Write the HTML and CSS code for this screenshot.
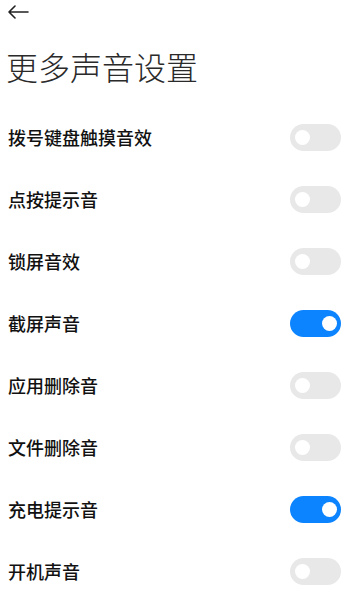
FILE: index.html
```html
<!DOCTYPE html>
<html lang="zh-CN">
<head>
<meta charset="utf-8">
<link rel="stylesheet" href="styles.css">
</head>
<body>
<div class="page">
  <div class="topbar">
    <svg class="back" width="22" height="14" viewBox="0 0 22 14"><path d="M21 7H2M8 1L2 7l6 6" fill="none" stroke="#222" stroke-width="1.6" stroke-linecap="round" stroke-linejoin="round"/></svg>
  </div>
  <h1 class="title">更多声音设置</h1>
  <ul class="list">
    <li class="row"><span class="label">拨号键盘触摸音效</span><span class="toggle"><span class="knob"></span></span></li>
    <li class="row"><span class="label">点按提示音</span><span class="toggle"><span class="knob"></span></span></li>
    <li class="row"><span class="label">锁屏音效</span><span class="toggle"><span class="knob"></span></span></li>
    <li class="row"><span class="label">截屏声音</span><span class="toggle on"><span class="knob"></span></span></li>
    <li class="row"><span class="label">应用删除音</span><span class="toggle"><span class="knob"></span></span></li>
    <li class="row"><span class="label">文件删除音</span><span class="toggle"><span class="knob"></span></span></li>
    <li class="row"><span class="label">充电提示音</span><span class="toggle on"><span class="knob"></span></span></li>
    <li class="row"><span class="label">开机声音</span><span class="toggle"><span class="knob"></span></span></li>
  </ul>
</div>
</body>
</html>
```
FILE: styles.css
```css
* { box-sizing: border-box; }
html, body { margin: 0; padding: 0; background: #fff; }
body { font-family: "Noto Sans CJK SC", "Noto Sans", sans-serif; color: #111; }
.page { width: 364px; height: 600px; overflow: hidden; }
.topbar { height: 26px; padding: 5px 0 0 7px; }
.back { display: block; }
.title {
  margin: 0;
  padding: 0 0 0 6px;
  height: 80px;
  line-height: 80px;
  font-size: 32px;
  font-weight: 300;
  color: #2a2a2a;
  letter-spacing: 0;
}
.list { list-style: none; margin: 0; padding: 0; }
.row {
  height: 62px;
  display: flex;
  align-items: center;
  justify-content: space-between;
  padding: 0 23px 0 8px;
}
.label { font-size: 18px; font-weight: 500; color: #111; }
.toggle {
  width: 51px;
  height: 27px;
  border-radius: 14px;
  background: #e8e8e8;
  display: flex;
  align-items: center;
  padding: 0 5px;
}
.knob { width: 15px; height: 15px; border-radius: 50%; background: #fff; }
.toggle.on { background: #0d84ff; justify-content: flex-end; padding: 0 4px; }
```
